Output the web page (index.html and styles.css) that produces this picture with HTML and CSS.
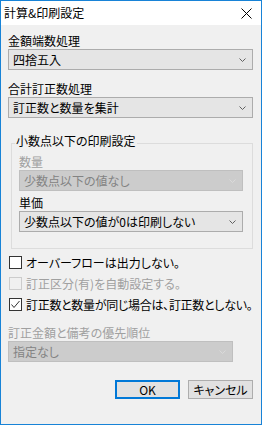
FILE: index.html
```html
<!DOCTYPE html>
<html lang="ja">
<head>
    <meta charset="UTF-8">
    <title>計算&amp;印刷設定</title>
    <link rel="stylesheet" href="styles.css">
</head>
<body>
    <div class="window">
        <div class="titlebar">
            <span class="title">計算&amp;印刷設定</span>
            <svg class="close" width="11" height="11" viewBox="0 0 11 11">
                <path d="M0.5 0.5 L10.5 10.5 M10.5 0.5 L0.5 10.5" stroke="#000" stroke-width="1" fill="none"/>
            </svg>
        </div>
        <div class="content">
            <div class="label">金額端数処理</div>
            <div class="combo">
                <span>四捨五入</span>
                <svg class="chevron" width="7" height="4" viewBox="0 0 7 4"><polyline points="0.5,0.5 3.5,3.5 6.5,0.5"/></svg>
            </div>

            <div class="label">合計訂正数処理</div>
            <div class="combo">
                <span>訂正数と数量を集計</span>
                <svg class="chevron" width="7" height="4" viewBox="0 0 7 4"><polyline points="0.5,0.5 3.5,3.5 6.5,0.5"/></svg>
            </div>

            <fieldset class="group">
                <legend>小数点以下の印刷設定</legend>
                <div class="label disabled">数量</div>
                <div class="combo combo-disabled">
                    <span>少数点以下の値なし</span>
                    <svg class="chevron" width="7" height="4" viewBox="0 0 7 4"><polyline points="0.5,0.5 3.5,3.5 6.5,0.5"/></svg>
                </div>
                <div class="label">単価</div>
                <div class="combo">
                    <span>少数点以下の値が0は印刷しない</span>
                    <svg class="chevron" width="7" height="4" viewBox="0 0 7 4"><polyline points="0.5,0.5 3.5,3.5 6.5,0.5"/></svg>
                </div>
            </fieldset>

            <div class="check-row">
                <span class="box"></span>
                <span>オーバーフローは出力しない。</span>
            </div>
            <div class="check-row disabled">
                <span class="box"></span>
                <span>訂正区分(有)を自動設定する。</span>
            </div>
            <div class="check-row">
                <span class="box">
                    <svg width="11" height="11" viewBox="0 0 11 11"><polyline points="1.5,5.5 4,8.5 9.5,2" fill="none" stroke="#333" stroke-width="1"/></svg>
                </span>
                <span class="tight">訂正数と数量が同じ場合は、訂正数としない。</span>
            </div>

            <div class="label disabled bottom-label">訂正金額と備考の優先順位</div>
            <div class="combo combo-disabled combo-short">
                <span>指定なし</span>
                <svg class="chevron" width="7" height="4" viewBox="0 0 7 4"><polyline points="0.5,0.5 3.5,3.5 6.5,0.5"/></svg>
            </div>

            <div class="buttons">
                <button class="btn btn-default">OK</button>
                <button class="btn">キャンセル</button>
            </div>
        </div>
    </div>
</body>
</html>
```

FILE: styles.css
```css
* {
    box-sizing: border-box;
}

body {
    margin: 0;
    font-family: "Noto Sans CJK JP", "Noto Sans", sans-serif;
    font-size: 12px;
    font-feature-settings: "palt";
    color: #000;
}

.window {
    width: 262px;
    height: 425px;
    border: 1px solid #1883d7;
    background-color: #f0f0f0;
}

.titlebar {
    height: 24px;
    background-color: #fff;
    display: flex;
    align-items: center;
    justify-content: space-between;
    padding: 0 9px 0 3px;
}

.title {
    line-height: 16px;
}

.close {
    display: block;
}

.content {
    padding: 8px 8px 0 7px;
}

.label {
    line-height: 16px;
}

.disabled {
    color: #a0a0a0;
}

.combo {
    height: 21px;
    margin-bottom: 11px;
    padding: 0 6px 0 4px;
    border: 1px solid #acacac;
    background-color: #e5e5e5;
    display: flex;
    align-items: center;
    justify-content: space-between;
    line-height: 16px;
}

.chevron {
    display: block;
    fill: none;
    stroke: #606060;
    stroke-width: 1;
}

.combo-disabled {
    border-color: #bfbfbf;
    background-color: #cccccc;
    color: #838383;
}

.combo-disabled .chevron {
    stroke: #dadada;
}

.group {
    margin: 15px 0 3px 3px;
    padding: 0 9px 16px 7px;
    border: 1px solid #dcdcdc;
}

.group legend {
    margin-left: -4px;
    padding: 0 1px 5px;
    line-height: 16px;
}

.group .combo {
    margin-bottom: 4px;
}

.group .combo:last-child {
    margin-bottom: 0;
}

.check-row {
    height: 21px;
    display: flex;
    align-items: center;
    gap: 4px;
    padding-left: 1px;
    white-space: nowrap;
}

.tight {
    letter-spacing: -0.3px;
}

.box {
    flex: none;
    width: 13px;
    height: 13px;
    border: 1px solid #333;
    background-color: #fff;
    display: flex;
    align-items: center;
    justify-content: center;
}

.check-row.disabled .box {
    border-color: #cccccc;
    background-color: #f0f0f0;
}

.bottom-label {
    margin-top: 10px;
}

.combo-short {
    width: 225px;
    margin-bottom: 0;
}

.buttons {
    margin-top: 18px;
    display: flex;
    justify-content: flex-end;
    gap: 8px;
}

.btn {
    width: 65px;
    height: 19px;
    padding: 0;
    border: 1px solid #adadad;
    background-color: #e1e1e1;
    font-family: inherit;
    font-size: 12px;
    font-feature-settings: "palt";
    line-height: 15px;
    color: #000;
}

.btn-default {
    border: 2px solid #0078d7;
}
```
